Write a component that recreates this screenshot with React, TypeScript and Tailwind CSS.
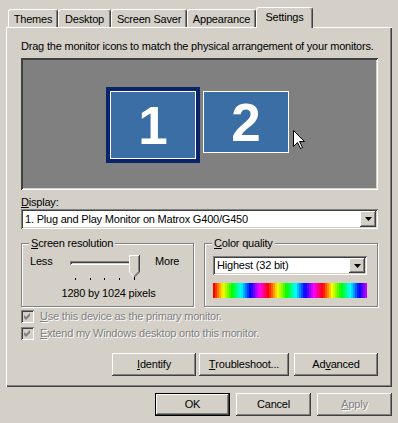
import React from "react";

const RAISED =
  "shadow-[inset_-1px_-1px_0_#404040,inset_1px_1px_0_#ffffff,inset_-2px_-2px_0_#808080,inset_2px_2px_0_#d4d0c8]";
const SUNKEN =
  "shadow-[inset_1px_1px_0_#808080,inset_-1px_-1px_0_#ffffff,inset_2px_2px_0_#404040,inset_-2px_-2px_0_#d4d0c8]";

function U({ children }: { children: React.ReactNode }) {
  return <span className="underline underline-offset-[1px] decoration-1">{children}</span>;
}

function Tab({ label, w, selected }: { label: string; w: string; selected?: boolean }) {
  if (selected) {
    return (
      <div
        className={`relative z-10 -mb-px h-[21px] ${w} bg-[#d4d0c8] border-l border-t border-white border-r border-r-[#404040] rounded-t-[3px] shadow-[inset_-1px_0_0_#808080] flex justify-center pt-[3px] leading-[13px]`}
      >
        {label}
      </div>
    );
  }
  return (
    <div
      className={`h-[18px] ${w} border-l border-t border-white border-r border-r-[#404040] rounded-t-[3px] shadow-[inset_-1px_0_0_#808080] flex justify-center pt-[3px] leading-[13px]`}
    >
      {label}
    </div>
  );
}

function Arrow() {
  return (
    <svg width="7" height="4" viewBox="0 0 7 4">
      <polygon points="0,0 7,0 3.5,4" fill="#000" />
    </svg>
  );
}

function Combo({ text, cls }: { text: string; cls: string }) {
  return (
    <div className={`flex items-center bg-white p-[2px] ${SUNKEN} ${cls}`}>
      <span className="flex-1 pl-[2px] leading-[13px] whitespace-nowrap overflow-hidden">{text}</span>
      <div className={`w-[16px] self-stretch bg-[#d4d0c8] ${RAISED} flex items-center justify-center`}>
        <Arrow />
      </div>
    </div>
  );
}

function Btn({
  children,
  cls,
  def,
  disabled,
}: {
  children: React.ReactNode;
  cls: string;
  def?: boolean;
  disabled?: boolean;
}) {
  if (def) {
    return (
      <div className={`h-[23px] ${cls} border border-black flex`}>
        <div className={`flex-1 ${RAISED} flex items-center justify-center leading-[13px]`}>{children}</div>
      </div>
    );
  }
  return (
    <div
      className={`h-[23px] ${cls} ${RAISED} flex items-center justify-center leading-[13px] ${
        disabled ? "text-[#808080] [text-shadow:1px_1px_0_#ffffff]" : ""
      }`}
    >
      {children}
    </div>
  );
}

function CheckRow({ children }: { children: React.ReactNode }) {
  return (
    <div className="h-[17px] flex items-center">
      <div className={`w-[13px] h-[13px] bg-[#d4d0c8] ${SUNKEN} flex items-center justify-center`}>
        <svg width="13" height="13" viewBox="0 0 13 13">
          <path d="M3 5 L5 7 L9 3 L9 6 L5 10 L3 8 Z" fill="#808080" />
        </svg>
      </div>
      <span className="ml-[6px] leading-[13px] text-[#808080] [text-shadow:1px_1px_0_#ffffff]">{children}</span>
    </div>
  );
}

function Spectrum() {
  const rects = [];
  for (let i = 0; i < 77; i++) {
    const hue = (((i * 2) / 54.5) * 360) % 360;
    rects.push(<rect key={i} x={i * 2} y={0} width={2} height={15} fill={`hsl(${hue},100%,50%)`} />);
  }
  return (
    <svg width="154" height="15" viewBox="0 0 154 15" className="block">
      {rects}
    </svg>
  );
}

export default function App() {
  return (
    <div className="w-[398px] h-[423px] bg-[#d4d0c8] overflow-hidden text-black text-[11px] tracking-[-0.2px] font-['Tahoma','Liberation_Sans',Arial,sans-serif]">
      <div className="pl-[6px] pr-[6px] pt-[7px]">
        {/* tabs */}
        <div className="flex items-end h-[20px] pl-[2px]">
          <Tab label="Themes" w="w-[50px]" />
          <Tab label="Desktop" w="w-[53px]" />
          <Tab label="Screen Saver" w="w-[76px]" />
          <Tab label="Appearance" w="w-[69px]" />
          <Tab label="Settings" w="w-[57px]" selected />
        </div>
        {/* panel */}
        <div className="w-[386px] h-[360px] shadow-[inset_1px_1px_0_#ffffff,inset_-1px_-1px_0_#404040,inset_-2px_-2px_0_#808080] pl-[15px] pr-[14px] pt-[13px] flex flex-col">
          <div className="leading-[13px] whitespace-nowrap">
            Drag the monitor icons to match the physical arrangement of your monitors.
          </div>
          {/* monitor canvas */}
          <div className="relative mt-[5px] h-[132px] bg-[#808080] shadow-[inset_1px_1px_0_#404040,inset_-1px_-1px_0_#ffffff,inset_2px_2px_0_#404040,inset_-2px_-2px_0_#d4d0c8]">
            <div className="absolute left-[85px] top-[29px] w-[94px] h-[76px] bg-[#0a246a] p-[4px]">
              <div className="w-full h-full border border-white bg-[#3a6ea5] flex items-center justify-center text-white font-bold text-[53px] leading-none font-['Liberation_Sans',Arial,sans-serif]">
                1
              </div>
            </div>
            <div className="absolute left-[182px] top-[33px] w-[86px] h-[62px] border border-white bg-[#3a6ea5] flex items-center justify-center text-white font-bold text-[53px] leading-none font-['Liberation_Sans',Arial,sans-serif]">
              2
            </div>
            <svg className="absolute left-[272px] top-[72px]" width="12" height="20" viewBox="0 0 12 20">
              <polygon
                points="0.5,0.5 0.5,16.5 4.5,12.5 7.5,18.5 9.5,17.5 6.5,11.5 11.5,11.5"
                fill="#ffffff"
                stroke="#000000"
                strokeWidth="1"
              />
            </svg>
          </div>
          {/* display */}
          <div className="mt-[6px] leading-[13px]">
            <U>D</U>isplay:
          </div>
          <Combo text="1. Plug and Play Monitor on Matrox G400/G450" cls="h-[20px] mt-0" />
          {/* groups */}
          <div className="mt-[14px] flex gap-[10px]">
            <div className="w-[173px] h-[64px] border border-[#808080] shadow-[inset_1px_1px_0_#ffffff,1px_1px_0_#ffffff] flex flex-col">
              <div className="-mt-[7px] ml-[7px] self-start px-[2px] bg-[#d4d0c8] leading-[13px]">
                <U>S</U>creen resolution
              </div>
              <div className="flex items-start mt-[4px] pl-[8px]">
                <span className="w-[37px] leading-[13px] mt-[1px]">Less</span>
                <div className="relative w-[76px] h-[26px]">
                  <div className={`absolute left-[3px] top-[7px] w-[70px] h-[4px] ${SUNKEN}`} />
                  <div className="absolute left-[8px] top-[24px] w-px h-[2px] bg-black" />
                  <div className="absolute left-[23px] top-[24px] w-px h-[2px] bg-black" />
                  <div className="absolute left-[37px] top-[24px] w-px h-[2px] bg-black" />
                  <div className="absolute left-[52px] top-[24px] w-px h-[2px] bg-black" />
                  <div className="absolute left-[67px] top-[22px] w-px h-[4px] bg-black" />
                  <svg className="absolute left-[62px] top-[1px]" width="11" height="22" viewBox="0 0 11 22">
                    <polygon points="0,0 10,0 10,17 5,22 0,17" fill="#d4d0c8" />
                    <polyline points="0.5,17 0.5,0.5 10,0.5" fill="none" stroke="#ffffff" strokeWidth="1" />
                    <polyline points="10.5,0 10.5,17 5.5,22" fill="none" stroke="#404040" strokeWidth="1" />
                    <polyline points="9.5,1 9.5,16.6 5.2,21" fill="none" stroke="#808080" strokeWidth="1" />
                    <polyline points="0.5,17 5,21.5" fill="none" stroke="#ffffff" strokeWidth="1" />
                  </svg>
                </div>
                <span className="ml-[12px] leading-[13px] mt-[1px]">More</span>
              </div>
              <div className="mt-[7px] text-center leading-[13px] pl-[2px]">1280 by 1024 pixels</div>
            </div>
            <div className="w-[174px] h-[64px] border border-[#808080] shadow-[inset_1px_1px_0_#ffffff,1px_1px_0_#ffffff] flex flex-col">
              <div className="-mt-[7px] ml-[7px] self-start px-[2px] bg-[#d4d0c8] leading-[13px]">
                <U>C</U>olor quality
              </div>
              <div className="pl-[8px] mt-[6px]">
                <Combo text="Highest (32 bit)" cls="w-[154px] h-[19px]" />
                <div className="mt-[8px]">
                  <Spectrum />
                </div>
              </div>
            </div>
          </div>
          {/* checkboxes */}
          <div className="mt-[1px]">
            <CheckRow>
              <U>U</U>se this device as the primary monitor.
            </CheckRow>
            <CheckRow>
              <U>E</U>xtend my Windows desktop onto this monitor.
            </CheckRow>
          </div>
          {/* buttons */}
          <div className="mt-[11px] flex justify-end">
            <Btn cls="w-[84px]">
              <U>I</U>dentify
            </Btn>
            <Btn cls="w-[90px] ml-[3px]">
              <U>T</U>roubleshoot...
            </Btn>
            <Btn cls="w-[84px] ml-[5px]">
              Ad<U>v</U>anced
            </Btn>
          </div>
        </div>
      </div>
      <div className="flex justify-end pr-[6px] mt-[6px] gap-[6px]">
        <Btn cls="w-[75px]" def>
          OK
        </Btn>
        <Btn cls="w-[75px]">Cancel</Btn>
        <Btn cls="w-[75px]" disabled>
          <U>A</U>pply
        </Btn>
      </div>
    </div>
  );
}
